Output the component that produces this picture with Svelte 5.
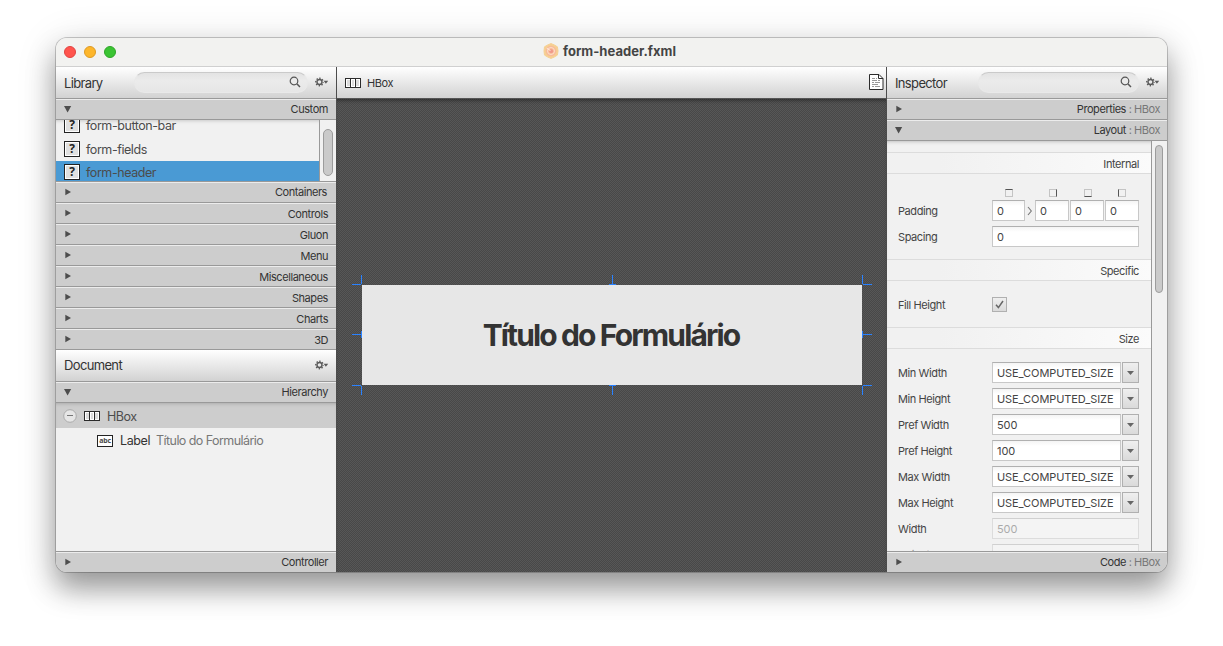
<script>
  const sections = ['Containers', 'Controls', 'Gluon', 'Menu', 'Miscellaneous', 'Shapes', 'Charts', '3D'];
  const library = ['form-button-bar', 'form-fields', 'form-header'];
  const sides = ['top', 'right', 'bottom', 'left'];
  const sizes = [
    ['Min Width', 'USE_COMPUTED_SIZE'],
    ['Min Height', 'USE_COMPUTED_SIZE'],
    ['Pref Width', '500'],
    ['Pref Height', '100'],
    ['Max Width', 'USE_COMPUTED_SIZE'],
    ['Max Height', 'USE_COMPUTED_SIZE']
  ];
  const marks = ['tl', 'tc', 'tr', 'ml', 'mr', 'bl', 'bc', 'br'];
  const markPaths = {
    tl: 'M9.5 0V9M0 9.5H9',
    tc: 'M9.5 0V9M6 9.5H13',
    tr: 'M9.5 0V9M10 9.5H19',
    ml: 'M0 9.5H9M9.5 6V13',
    mr: 'M10 9.5H19M9.5 6V13',
    bl: 'M0 9.5H9M9.5 10V19',
    bc: 'M6 9.5H13M9.5 10V19',
    br: 'M10 9.5H19M9.5 10V19'
  };
</script>

{#snippet gear()}
  <svg class="gear" width="14" height="10" viewBox="0 0 14 10">
    <circle cx="4.5" cy="5" r="2.5" fill="none" stroke="#5a5a5a" stroke-width="1.4" />
    <circle cx="4.5" cy="5" r="3.7" fill="none" stroke="#5a5a5a" stroke-width="1.4" stroke-dasharray="1.4 1.506" stroke-dashoffset="0.7" />
    <path d="M8.6 3.8H13.2L10.9 6.8Z" fill="#5a5a5a" />
  </svg>
{/snippet}

{#snippet search(cls)}
  <div class="search {cls}">
    <svg width="12" height="12" viewBox="0 0 12 12" fill="none" stroke="#555">
      <circle cx="5" cy="5" r="3.8" stroke-width="1.2" />
      <path d="M7.8 7.8L11 11" stroke-width="1.5" />
    </svg>
  </div>
{/snippet}

{#snippet header(name, open, extra, cls)}
  <div class="header {cls}">
    <svg width="8" height="8" viewBox="0 0 8 8">
      <path d={open ? 'M0 1H7.2L3.6 7.4Z' : 'M1.3 0.8V7.2L7 4Z'} fill="#4d4d4d" />
    </svg>
    <span class="name">{name}{#if extra}<span class="extra">{extra}</span>{/if}</span>
  </div>
{/snippet}

{#snippet hbox()}
  <svg class="hboxicon" width="16" height="10" viewBox="0 0 16 10" shape-rendering="crispEdges">
    <path d="M0.5 0.5H15.5V9.5H0.5Z" fill="#fff" stroke="#2b2b2b" />
    <path d="M2 2h3v6h-3zM7 2h2v6h-2zM11 2h3v6h-3z" fill="#dcdcdc" />
    <path d="M5.5 0V10M10.5 0V10" stroke="#2b2b2b" />
  </svg>
{/snippet}

<div class="window">
  <div class="titlebar">
    <div class="lights"><i class="red"></i><i class="yellow"></i><i class="green"></i></div>
    <div class="title">
      <svg width="16" height="16" viewBox="0 0 16 16">
        <path d="M8 0.6L11.2 1.9L14.4 3.8L15 8L14.4 12.1L11.2 14.1L8 15.4L4.8 14.1L1.5 12.1L1 8L1.5 3.8L4.8 1.9Z" fill="#f6cf92" stroke="#f6cf92" stroke-linejoin="round" />
        <circle cx="8" cy="8" r="5.3" fill="#f8bb98" />
        <circle cx="8" cy="8" r="3.5" fill="none" stroke="#fde0d0" stroke-width="0.9" />
        <circle cx="8.2" cy="8.2" r="1.9" fill="#f0988a" />
        <path d="M3.7 5.2L7.5 7.6" stroke="#fde9dd" stroke-width="1" />
      </svg>
      <b>form-header.fxml</b>
    </div>
  </div>

  <div class="body">
    <div class="left">
      <div class="toolbar side">
        <span class="heading">Library</span>
        {@render search('wide')}
        {@render gear()}
      </div>
      {@render header('Custom', true, '', 'open')}
      <div class="library">
        <div class="items">
          {#each library as item, i}
            <div class="item" class:selected={i === 2}>
              <span class="unknown"><b>?</b></span><span>{item}</span>
            </div>
          {/each}
        </div>
        <div class="scroll"><div class="thumb small"></div></div>
      </div>
      {#each sections as s, i}
        {@render header(s, false, '', i === 0 ? 'first' : 'closed')}
      {/each}
      <div class="toolbar side document">
        <span class="heading">Document</span>
        {@render gear()}
      </div>
      {@render header('Hierarchy', true, '', 'open')}
      <div class="tree">
        <div class="node root">
          <svg width="14" height="14" viewBox="0 0 14 14">
            <circle cx="7" cy="7" r="6.3" fill="#e6e6e6" stroke="#ababab" />
            <path d="M4 6.5H10" stroke="#777" stroke-width="1" />
          </svg>
          {@render hbox()}
          <span>HBox</span>
        </div>
        <div class="node child">
          <span class="abc">abc</span>
          <span class="kind">Label</span>
          <span class="info">Título do Formulário</span>
        </div>
      </div>
      {@render header('Controller', false, '', 'bottom')}
    </div>

    <div class="center">
      <div class="toolbar crumb">
        {@render hbox()}
        <span>HBox</span>
        <svg class="doc" width="15" height="17" viewBox="0 0 15 17">
          <path d="M0.5 0.5H10L14 4.5V15.5H0.5Z" fill="#fff" stroke="#2b2b2b" />
          <path d="M9.5 0.5V4.5H14" fill="none" stroke="#2b2b2b" />
          <path d="M3 4.5h3M7 4.5h1M3 6.5h5M9 6.5h2M3 8.5h2M6 8.5h5M3 10.5h6M3 12.5h2M6 12.5h5" stroke="#999" />
        </svg>
      </div>
      <div class="canvas">
        <div class="form">
          <h1>Título do Formulário</h1>
          {#each marks as m}
            <svg class="mark {m}" width="19" height="19" viewBox="0 0 19 19" shape-rendering="crispEdges">
              <path d={markPaths[m]} stroke="#2a82ff" fill="none" />
            </svg>
          {/each}
        </div>
      </div>
    </div>

    <div class="right">
      <div class="toolbar side">
        <span class="heading">Inspector</span>
        {@render search('narrow')}
        {@render gear()}
      </div>
      {@render header('Properties', false, ' : HBox', 'open')}
      {@render header('Layout', true, ' : HBox', 'open')}
      <div class="inspector">
        <div class="form-area">
          <div class="band first-band">Internal</div>
          <div class="group internal">
            <div class="side-icons">
              {#each sides as s}<i class={s}></i>{/each}
            </div>
            <div class="row">
              <span class="label">Padding</span>
              <div class="insets">
                <div class="input">0</div>
                <svg width="10" height="21" viewBox="0 0 10 21"><path d="M3 7L6.3 11L3 15" fill="none" stroke="#777" stroke-width="1.1" /></svg>
                <div class="input">0</div>
                <div class="input">0</div>
                <div class="input">0</div>
              </div>
            </div>
            <div class="row">
              <span class="label">Spacing</span>
              <div class="input grow">0</div>
            </div>
          </div>
          <div class="band">Specific</div>
          <div class="group specific">
            <div class="row">
              <span class="label">Fill Height</span>
              <div class="check">
                <svg width="9" height="9" viewBox="0 0 9 9"><path d="M1 4.8L3.4 7.6L8 1" fill="none" stroke="#666" stroke-width="1.5" /></svg>
              </div>
            </div>
          </div>
          <div class="band">Size</div>
          <div class="group size">
            {#each sizes as [label, value]}
              <div class="row">
                <span class="label">{label}</span>
                <div class="input grow">{value}</div>
                <div class="drop"><svg width="7" height="4" viewBox="0 0 7 4"><path d="M0 0H7L3.5 4Z" fill="#666" /></svg></div>
              </div>
            {/each}
            <div class="row"><span class="label">Width</span><div class="input grow off">500</div></div>
            <div class="row"><span class="label faded">Height</span><div class="input grow off">100</div></div>
          </div>
        </div>
        <div class="scroll big"><div class="thumb large"></div></div>
      </div>
      {@render header('Code', false, ' : HBox', 'bottom')}
    </div>
  </div>
</div>

<style>
  :global(body) {
    background: #fff;
  }
  :global(#app) {
    display: flow-root;
    height: 646px;
    overflow: hidden;
  }
  .window, .window * {
    box-sizing: border-box;
  }
  .window {
    display: flex;
    flex-direction: column;
    width: 1111px;
    height: 534px;
    margin: 38px 56px 0;
    border-radius: 11px;
    overflow: hidden;
    font-family: Inter, "Liberation Sans", sans-serif;
    font-size: 11px;
    color: #333;
    background: #f1f1f1;
    box-shadow: 0 0 0 1px rgba(0, 0, 0, 0.2), 0 17px 28px rgba(0, 0, 0, 0.34), 0 6px 40px rgba(0, 0, 0, 0.15);
  }
  .titlebar {
    display: flex;
    align-items: center;
    height: 29px;
    padding-bottom: 1px;
    background: #f2f2f0;
    border-bottom: 1px solid #d0d0d0;
    flex: none;
  }
  .lights {
    display: flex;
    gap: 8px;
    padding-left: 8px;
    width: 487px;
  }
  .lights i {
    width: 12px;
    height: 12px;
    border-radius: 50%;
    border: 1px solid;
  }
  .red { background: #ff544d; border-color: #e04340 !important; }
  .yellow { background: #fdb62b; border-color: #dd9a24 !important; }
  .green { background: #3bc433; border-color: #2fa528 !important; }
  .title {
    display: flex;
    align-items: center;
    gap: 4px;
    padding-bottom: 2px;
    font-size: 13px;
    letter-spacing: 0.03px;
    color: #444;
  }
  .body {
    display: flex;
    flex: 1;
    min-height: 0;
  }
  .left, .right {
    display: flex;
    flex-direction: column;
    width: 280px;
    flex: none;
  }
  .center {
    display: flex;
    flex-direction: column;
    flex: 1;
    border-left: 1px solid #4c4c4c;
    border-right: 1px solid #4c4c4c;
  }
  .toolbar {
    display: flex;
    align-items: center;
    height: 32px;
    flex: none;
    background: linear-gradient(#fff, #d2d2d2);
    border-bottom: 1px solid #999;
  }
  .side {
    padding: 0 7px 0 8px;
    justify-content: space-between;
  }
  .heading {
    font-size: 13px;
    letter-spacing: -0.65px;
  }
  .document .heading { padding-bottom: 2px; }
  .search {
    display: flex;
    align-items: center;
    justify-content: flex-end;
    height: 21px;
    border-radius: 11px;
    background: linear-gradient(#e3e3e3, #ebebeb 40%, #e6e6e6);
    border: 1px solid #e9e9e9;
    border-top-color: #cacaca;
    margin-left: auto;
    margin-right: 7px;
    padding: 0 6px 2px 0;
  }
  .wide { width: 174px; }
  .narrow { width: 161px; }
  .side > .gear { margin-top: -1px; }
  .header {
    display: flex;
    align-items: center;
    justify-content: space-between;
    height: 21px;
    flex: none;
    padding: 0 8px;
    background: #cdcdcd;
    border-top: 1px solid #ececec;
    border-bottom: 1px solid #999;
    letter-spacing: -0.44px;
  }
  .right .header { padding-right: 7px; }
  .name { white-space: pre; }
  .extra { color: #777; }
  .open { padding-bottom: 1px; }
  .first svg, .closed svg { margin-top: -2px; }
  .first .name { margin-right: 1px; padding-bottom: 1px; }
  .closed .name { padding-top: 1px; }
  .bottom {
    border-top-color: #999;
    border-bottom: 0;
    box-shadow: inset 0 1px #ececec;
  }
  .library {
    display: flex;
    height: 62px;
    flex: none;
    border-bottom: 1px solid #999;
    overflow: hidden;
    box-shadow: inset 0 3px 4px -3px rgba(0, 0, 0, 0.25);
  }
  .items {
    display: flex;
    flex-direction: column;
    justify-content: flex-end;
    flex: 1;
    margin-bottom: -3px;
    font-size: 12.5px;
    letter-spacing: -0.43px;
    color: #4c4c4c;
  }
  .item {
    display: flex;
    align-items: center;
    gap: 6px;
    height: 23px;
    padding-left: 8px;
    flex: none;
  }
  .item:first-child { height: 24px; padding-bottom: 1px; }
  .selected { background: #4a9ad4; }
  .unknown {
    width: 16px;
    height: 16px;
    margin-top: -1px;
    border: 1px solid #222;
    background: #e0e0e0;
    box-shadow: inset 0 0 0 1px #fff;
    text-align: center;
    font: 12px/14px "Open Sans", sans-serif;
    letter-spacing: 0;
    color: #222;
  }
  .scroll {
    width: 17px;
    border-left: 1px solid #999;
    padding-left: 3px;
    background: #f1f1f1;
  }
  .thumb {
    width: 10px;
    border: 1px solid #9c9c9c;
    border-radius: 5px;
    background: #cacaca;
  }
  .small { margin-top: 9px; height: 47px; }
  .large { margin-top: 4px; height: 148px; width: 8px; }
  .big { width: 16px; }
  .tree {
    flex: 1;
    background: #f1f1f1;
    font-size: 12.5px;
    letter-spacing: -0.5px;
    color: #4c4c4c;
  }
  .node {
    display: flex;
    align-items: center;
    height: 25px;
  }
  .root {
    background: #cdcdcd;
    padding: 2px 0 0 7px;
    gap: 7px;
    box-shadow: inset 0 3px 4px -3px rgba(0, 0, 0, 0.25);
  }
  .root svg { margin-top: -1px; }
  .child { padding-left: 41px; }
  .abc {
    width: 16px;
    height: 12px;
    border: 1px solid #222;
    background: #fff;
    text-align: center;
    font: bold 7px/9px "Noto Sans", sans-serif;
    letter-spacing: -0.2px;
  }
  .kind { margin: 0 6px 0 7px; color: #333; letter-spacing: -0.4px; }
  .info { color: #777; letter-spacing: -0.56px; }
  .crumb {
    padding: 0 2px 0 8px;
    gap: 6px;
    letter-spacing: -0.4px;
    border-bottom-color: #555;
  }
  .doc { margin-left: auto; }
  .canvas {
    display: flex;
    flex: 1;
    padding: 186px 0 0 25px;
    background: repeating-conic-gradient(#484848 0 25%, #575757 0 50%) 0 0 / 2px 2px;
    box-shadow: inset 0 4px 4px -3px rgba(0, 0, 0, 0.5);
  }
  .form {
    position: relative;
    display: flex;
    align-items: center;
    justify-content: center;
    width: 500px;
    height: 100px;
    background: #e7e7e7;
  }
  h1 {
    margin: 0 2px 0 0;
    font-size: 30px;
    font-weight: 700;
    letter-spacing: -1.87px;
    white-space: nowrap;
  }
  .mark { position: absolute; }
  .tl { left: -10px; top: -10px; }
  .tc { left: 241px; top: -10px; }
  .tr { left: 491px; top: -10px; }
  .ml { left: -10px; top: 40px; }
  .mr { left: 491px; top: 40px; }
  .bl { left: -10px; top: 91px; }
  .bc { left: 241px; top: 91px; }
  .br { left: 491px; top: 91px; }
  .inspector {
    display: flex;
    flex: 1;
    min-height: 0;
    overflow: hidden;
    box-shadow: inset 0 3px 4px -3px rgba(0, 0, 0, 0.3);
  }
  .form-area {
    width: 264px;
    color: #444;
    letter-spacing: -0.42px;
  }
  .band {
    display: flex;
    align-items: center;
    justify-content: flex-end;
    height: 22px;
    padding: 1px 12px 0 0;
    border: solid #dcdcdc;
    border-width: 1px 0;
    background: linear-gradient(90deg, #f1f1f1 20%, #fbfbfb);
  }
  .first-band { margin-top: 11px; }
  .group {
    display: flex;
    flex-direction: column;
    gap: 5px;
    padding: 0 12px 0 11px;
  }
  .internal { height: 85px; padding-top: 15px; gap: 0; }
  .internal .row + .row { margin-top: 5px; }
  .specific { height: 46px; padding-top: 13px; }
  .size { padding-top: 13px; }
  .row {
    display: flex;
    align-items: center;
    height: 21px;
    flex: none;
  }
  .label { width: 94px; flex: none; }
  .faded { opacity: 0.5; }
  .side-icons {
    display: grid;
    grid-template-columns: 44px 35px 34px 8px;
    height: 11px;
    padding-left: 107px;
  }
  .side-icons i {
    width: 8px;
    height: 8px;
    border: 1px solid #c4c4c4;
  }
  .side-icons .top { border-top-color: #555; }
  .side-icons .right { border-right-color: #555; flex: none; }
  .side-icons .bottom {
    border: 1px solid #c4c4c4;
    border-bottom-color: #555;
    box-shadow: none;
  }
  .side-icons .left { border-left-color: #555; display: block; }
  .insets {
    display: grid;
    grid-template-columns: 33px 10px 34px 35px 35px;
  }
  .insets .input:nth-child(n + 4) { margin-left: 1px; }
  .input {
    height: 21px;
    border: 1px solid #c8c8c8;
    border-top-color: #b0b0b0;
    background: linear-gradient(#f4f4f4, #fff 5px);
    padding-left: 4px;
    line-height: 20px;
    letter-spacing: -0.08px;
  }
  .grow { flex: 1; }
  .off { opacity: 0.5; background: #f8f8f8; color: #666; }
  .drop {
    display: flex;
    align-items: center;
    justify-content: center;
    width: 17px;
    height: 21px;
    margin-left: 1px;
    border: 1px solid #b0b0b0;
    background: linear-gradient(#efefef, #dadada);
  }
  .check {
    display: flex;
    align-items: center;
    justify-content: center;
    width: 15px;
    height: 15px;
    border: 1px solid #b0b0b0;
    background: linear-gradient(#efefef, #dadada);
  }
</style>
